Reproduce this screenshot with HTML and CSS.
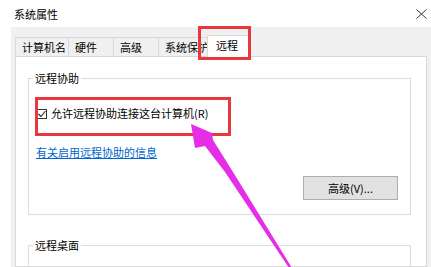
FILE: index.html
```html
<!DOCTYPE html>
<html lang="zh-CN">
<head>
<meta charset="utf-8">
<title>系统属性</title>
<link rel="stylesheet" href="styles.css">
</head>
<body>
<div class="window">
  <header class="titlebar">
    <span class="title">系统属性</span>
    <svg class="close" width="11" height="10" viewBox="0 0 11 10"><path d="M0.5 0.5 L10.5 9.5 M10.5 0.5 L0.5 9.5" stroke="#333" stroke-width="1" fill="none"/></svg>
  </header>
  <div class="client">
    <nav class="tabs">
      <span class="tab">计算机名</span>
      <span class="tab">硬件</span>
      <span class="tab">高级</span>
      <span class="tab">系统保护</span>
      <span class="tab tab-active">远程</span>
    </nav>
    <div class="panel">
      <fieldset class="group group-assist">
        <legend class="group-label">远程协助</legend>
        <label class="check-row">
          <span class="checkbox"><svg width="10" height="10" viewBox="0 0 10 10"><path d="M1.5 5 L4 7.5 L8.5 2" stroke="#222" stroke-width="1.1" fill="none"/></svg></span>
          <span>允许远程协助连接这台计算机(R)</span>
        </label>
        <a class="link" href="#">有关启用远程协助的信息</a>
        <div class="btn-row"><button class="btn" type="button">高级(V)...</button></div>
      </fieldset>
      <fieldset class="group group-desktop">
        <legend class="group-label">远程桌面</legend>
      </fieldset>
    </div>
  </div>
  <div class="mark mark-tab"></div>
  <div class="mark mark-check"></div>
  <svg class="arrow" width="431" height="267" viewBox="0 0 431 267">
    <polygon points="191,124 212,133 213,140 233,172 292,268 289,268 225,172 205,146 195,148" fill="#e62ee8"/>
  </svg>
</div>
</body>
</html>
```

FILE: styles.css
```css
* { box-sizing: border-box; }
html, body { margin: 0; padding: 0; }
body {
  background: #fff;
  font-family: "Noto Sans CJK SC", "Noto Sans", sans-serif;
  font-size: 11px;
  color: #000;
}
.window {
  position: relative;
  width: 431px;
  height: 267px;
  overflow: hidden;
  display: flex;
  flex-direction: column;
}
.titlebar {
  height: 27px;
  flex: none;
  display: flex;
  align-items: center;
  justify-content: space-between;
  padding: 0 4px 0 14px;
  line-height: 14px;
}
.close { display: block; margin-top: 1px; }
.client {
  flex: 1;
  margin-left: 11px;
  background: #f0f0f0;
  padding: 10px 4px 0 4px;
  display: flex;
  flex-direction: column;
  min-height: 0;
}
.tabs {
  display: flex;
  align-items: flex-end;
  height: 19px;
  flex: none;
  position: relative;
  z-index: 1;
}
.tab {
  height: 19px;
  min-width: 46px;
  padding: 0 2px 0 6px;
  border: 1px solid #d9d9d9;
  border-bottom: none;
  margin-right: -1px;
  line-height: 18px;
  background: #f0f0f0;
  white-space: nowrap;
}
.tab-active {
  height: 22px;
  width: 42px;
  min-width: 0;
  margin-left: -4px;
  margin-bottom: -1px;
  padding: 0 0 0 8px;
  background: #fff;
  line-height: 19px;
  position: relative;
}
.panel {
  flex: 1;
  background: #fff;
  border: 1px solid #d9d9d9;
  min-height: 0;
}
.group {
  margin: 0 15px 0 12px;
  padding: 0 0 0 8px;
  border: 1px solid #dcdcdc;
  min-width: 0;
}
.group-assist {
  margin-top: 14px;
  padding-bottom: 14px;
}
.group-desktop {
  margin-top: 23px;
  height: 80px;
}
.group-label {
  padding: 0 2px;
  margin-left: -4px;
  line-height: 14px;
}
.check-row {
  margin-top: 21px;
  display: flex;
  align-items: center;
  gap: 4px;
  line-height: 14px;
  height: 14px;
}
.checkbox {
  width: 10px;
  height: 10px;
  border: 1px solid #333;
  display: flex;
  align-items: center;
  justify-content: center;
  margin-top: 1px;
}
.checkbox svg { display: block; margin: -1px; }
.link {
  display: inline-block;
  margin: 25px 0 0 -1px;
  line-height: 14px;
  color: #0066cc;
  text-decoration: underline;
}
.btn-row {
  display: flex;
  justify-content: flex-end;
  padding-right: 12px;
  margin-top: 16px;
}
.btn {
  width: 95px;
  height: 24px;
  background: #e1e1e1;
  border: 1px solid #adadad;
  font-family: inherit;
  font-size: 11px;
  line-height: 14px;
  color: #000;
  padding: 0;
}
.mark {
  position: absolute;
  border: 3px solid #e8383d;
  pointer-events: none;
  z-index: 2;
}
.mark-tab { left: 198px; top: 26px; width: 53px; height: 34px; }
.mark-check { left: 35px; top: 97px; width: 196px; height: 39px; }
.arrow {
  position: absolute;
  left: 0;
  top: 0;
  pointer-events: none;
  z-index: 3;
}
```
